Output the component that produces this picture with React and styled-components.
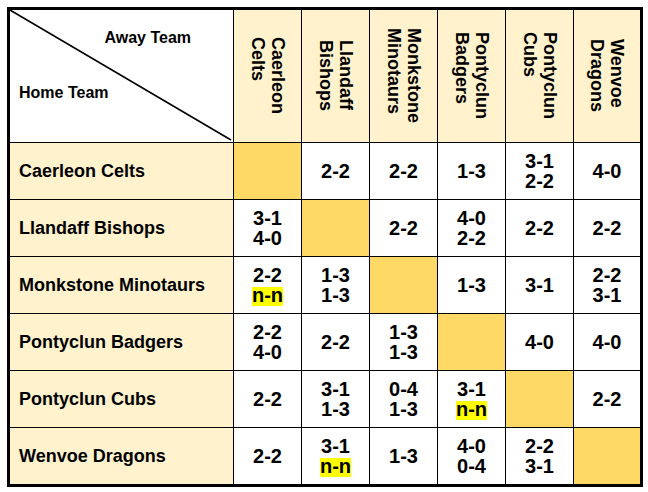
import React from 'react'
import styled, { createGlobalStyle } from 'styled-components'

const GlobalStyle = createGlobalStyle`
  body {
    margin: 0;
    background: #fff;
    font-family: "Liberation Sans", Arial, sans-serif;
    color: #000;
  }
`

const Page = styled.div`
  padding: 7px;
`

const Grid = styled.div`
  display: grid;
  grid-template-columns: 223px repeat(5, 67px) 66px;
  grid-template-rows: 132px repeat(6, 56px);
  gap: 1px;
  width: 630px;
  background: #000;
  border: 3px solid #000;
`

const tones = {
  white: '#ffffff',
  cream: '#fff2cc',
  gold: '#ffd966',
}

const Cell = styled.div`
  background: ${(p) => tones[p.$tone || 'white']};
  display: flex;
  align-items: center;
  justify-content: center;
  font-weight: bold;
`

const Corner = styled.div`
  position: relative;
  background: #fff;
  display: flex;
  flex-direction: column;
  font-size: 16px;
  font-weight: bold;
  line-height: 18px;
  padding: 19px 0 0 9px;
`

const Diagonal = styled.svg`
  position: absolute;
  left: 0;
  top: 0;
  width: 100%;
  height: 100%;
`

const AwayLabel = styled.span`
  align-self: flex-end;
  margin-right: 42px;
`

const HomeLabel = styled.span`
  margin-top: 37px;
`

const TeamHead = styled(Cell)`
  background: ${tones.cream};
`

const Vertical = styled.span`
  writing-mode: vertical-rl;
  font-size: 18px;
  line-height: 20px;
  text-align: start;
`

const RowLabel = styled(Cell)`
  background: ${tones.cream};
  justify-content: flex-start;
  padding-left: 9px;
  font-size: 18px;
`

const Score = styled(Cell)`
  flex-direction: column;
  font-size: 20px;
  line-height: 20px;
`

// highlighted "not yet played" result
const Mark = styled.span`
  display: block;
  margin-top: 2px;
  padding-bottom: 3px;
  background: #ffff00;
  line-height: 16px;
`

const teams = [
  'Caerleon Celts',
  'Llandaff Bishops',
  'Monkstone Minotaurs',
  'Pontyclun Badgers',
  'Pontyclun Cubs',
  'Wenvoe Dragons',
]

const results = [
  [null, ['2-2'], ['2-2'], ['1-3'], ['3-1', '2-2'], ['4-0']],
  [['3-1', '4-0'], null, ['2-2'], ['4-0', '2-2'], ['2-2'], ['2-2']],
  [['2-2', 'n-n'], ['1-3', '1-3'], null, ['1-3'], ['3-1'], ['2-2', '3-1']],
  [['2-2', '4-0'], ['2-2'], ['1-3', '1-3'], null, ['4-0'], ['4-0']],
  [['2-2'], ['3-1', '1-3'], ['0-4', '1-3'], ['3-1', 'n-n'], null, ['2-2']],
  [['2-2'], ['3-1', 'n-n'], ['1-3'], ['4-0', '0-4'], ['2-2', '3-1'], null],
]

const App = () => {
  return (
    <Page>
      <GlobalStyle />
      <Grid>
        <Corner>
          <Diagonal viewBox="0 0 223 132" preserveAspectRatio="none">
            <line x1="0" y1="0" x2="221" y2="130" stroke="#000" strokeWidth="1.6" />
          </Diagonal>
          <AwayLabel>Away Team</AwayLabel>
          <HomeLabel>Home Team</HomeLabel>
        </Corner>
        {teams.map((t) => {
          const [first, second] = t.split(' ')
          return (
            <TeamHead key={t}>
              <Vertical>
                {first}
                <br />
                {second}
              </Vertical>
            </TeamHead>
          )
        })}
        {teams.map((t, r) => (
          <React.Fragment key={t}>
            <RowLabel>{t}</RowLabel>
            {results[r].map((res, c) =>
              res === null ? (
                <Cell key={c} $tone="gold" />
              ) : (
                <Score key={c}>
                  {res.map((s, i) =>
                    s === 'n-n' ? <Mark key={i}>{s}</Mark> : <span key={i}>{s}</span>
                  )}
                </Score>
              )
            )}
          </React.Fragment>
        ))}
      </Grid>
    </Page>
  )
}

export default App
